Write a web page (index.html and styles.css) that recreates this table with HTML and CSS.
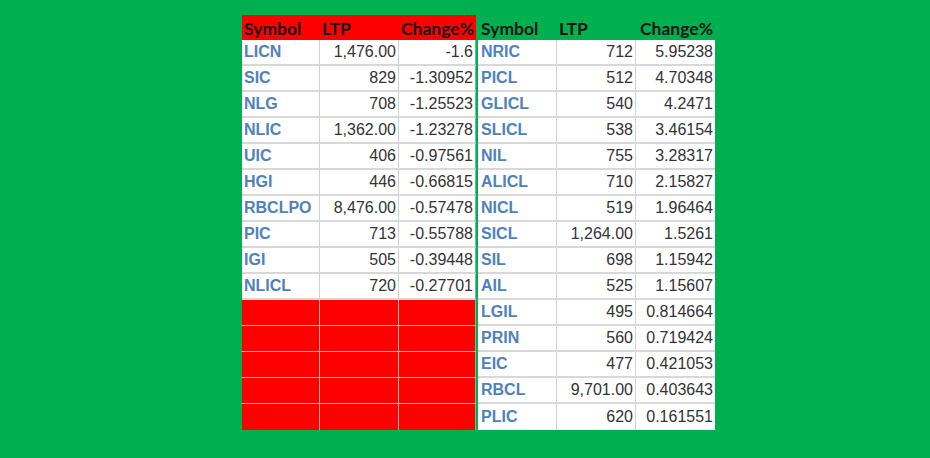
FILE: index.html
```html
<!DOCTYPE html>
<html>
<head>
<meta charset="utf-8">
<link rel="stylesheet" href="styles.css">
</head>
<body>
<div class="board">
  <div class="tbl tbl-left">
    <div class="hd">Symbol</div><div class="hd">LTP</div><div class="hd num">Change%</div>
    <div class="sym">LICN</div><div class="num">1,476.00</div><div class="num">-1.6</div>
    <div class="sym">SIC</div><div class="num">829</div><div class="num">-1.30952</div>
    <div class="sym">NLG</div><div class="num">708</div><div class="num">-1.25523</div>
    <div class="sym">NLIC</div><div class="num">1,362.00</div><div class="num">-1.23278</div>
    <div class="sym">UIC</div><div class="num">406</div><div class="num">-0.97561</div>
    <div class="sym">HGI</div><div class="num">446</div><div class="num">-0.66815</div>
    <div class="sym">RBCLPO</div><div class="num">8,476.00</div><div class="num">-0.57478</div>
    <div class="sym">PIC</div><div class="num">713</div><div class="num">-0.55788</div>
    <div class="sym">IGI</div><div class="num">505</div><div class="num">-0.39448</div>
    <div class="sym">NLICL</div><div class="num">720</div><div class="num">-0.27701</div>
    <div class="empty"></div><div class="empty"></div><div class="empty"></div>
    <div class="empty"></div><div class="empty"></div><div class="empty"></div>
    <div class="empty"></div><div class="empty"></div><div class="empty"></div>
    <div class="empty"></div><div class="empty"></div><div class="empty"></div>
    <div class="empty last"></div><div class="empty last"></div><div class="empty last"></div>
  </div>
  <div class="tbl tbl-right">
    <div class="hd">Symbol</div><div class="hd">LTP</div><div class="hd num">Change%</div>
    <div class="sym">NRIC</div><div class="num">712</div><div class="num">5.95238</div>
    <div class="sym">PICL</div><div class="num">512</div><div class="num">4.70348</div>
    <div class="sym">GLICL</div><div class="num">540</div><div class="num">4.2471</div>
    <div class="sym">SLICL</div><div class="num">538</div><div class="num">3.46154</div>
    <div class="sym">NIL</div><div class="num">755</div><div class="num">3.28317</div>
    <div class="sym">ALICL</div><div class="num">710</div><div class="num">2.15827</div>
    <div class="sym">NICL</div><div class="num">519</div><div class="num">1.96464</div>
    <div class="sym">SICL</div><div class="num">1,264.00</div><div class="num">1.5261</div>
    <div class="sym">SIL</div><div class="num">698</div><div class="num">1.15942</div>
    <div class="sym">AIL</div><div class="num">525</div><div class="num">1.15607</div>
    <div class="sym">LGIL</div><div class="num">495</div><div class="num">0.814664</div>
    <div class="sym">PRIN</div><div class="num">560</div><div class="num">0.719424</div>
    <div class="sym">EIC</div><div class="num">477</div><div class="num">0.421053</div>
    <div class="sym">RBCL</div><div class="num">9,701.00</div><div class="num">0.403643</div>
    <div class="sym last">PLIC</div><div class="num last">620</div><div class="num last">0.161551</div>
  </div>
</div>
</body>
</html>
```

FILE: styles.css
```css
html, body {
  margin: 0;
  padding: 0;
  background: #00b050;
  height: 100%;
}
.board {
  display: flex;
  gap: 2px;
  padding: 15px 0 0 242px;
}
.tbl {
  display: grid;
  grid-template-rows: 25px repeat(15, 26px);
  font-family: "Liberation Sans", Arial, sans-serif;
  font-size: 16px;
  color: #333333;
}
.tbl-left {
  grid-template-columns: 78px 79px 77px;
}
.tbl-right {
  grid-template-columns: 79px 79px 79px;
}
.tbl > div {
  box-sizing: border-box;
  display: flex;
  align-items: center;
  background: #ffffff;
  border-right: 1px solid #d2d2d2;
  border-bottom: 2px solid #d8d8d8;
  white-space: nowrap;
  overflow: hidden;
}
.tbl > div:nth-child(3n) {
  border-right: none;
}
.tbl > .hd {
  font-family: Lato, "Liberation Sans", sans-serif;
  font-weight: bold;
  font-size: 17.5px;
  color: #141414;
  border: none;
  padding: 1px 1px 0 2px;
}
.tbl-right > .hd:first-child {
  padding-left: 3px;
}
.tbl-left > .hd {
  background: #ff0000;
}
.tbl-right > .hd {
  background: #00b050;
}
.tbl > .sym {
  font-weight: bold;
  color: #4f81bd;
  padding-left: 2px;
}
.tbl-right > .sym {
  padding-left: 3px;
}
.tbl > .num {
  justify-content: flex-end;
  padding-right: 2px;
}
.tbl > .empty {
  background: #ff0000;
  border-bottom: 1px solid #e6b4b4;
  border-right: 1px solid #e6b4b4;
}
.tbl > .last {
  border-bottom: none;
}
.tbl-left > div:nth-child(3n) {
  border-right: 1px solid #6cc08e;
}
.tbl-left > .hd:nth-child(3) {
  border-right: none;
}
```
